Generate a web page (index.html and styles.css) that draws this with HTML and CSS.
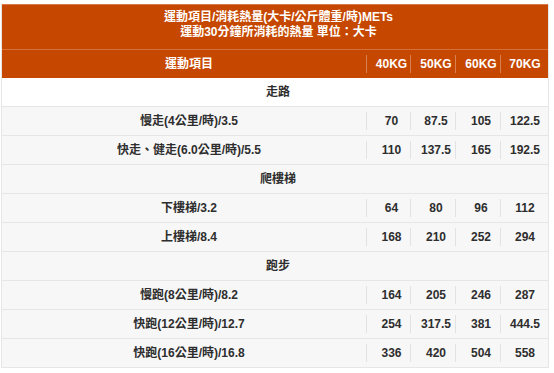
FILE: index.html
```html
<!DOCTYPE html>
<html lang="zh-Hant">
<head>
<meta charset="utf-8">
<title>運動消耗熱量</title>
<link rel="stylesheet" href="styles.css">
</head>
<body>
<div class="sheet">
  <div class="caption">
    <div>運動項目/消耗熱量(大卡/公斤體重/時)METs</div>
    <div>運動30分鐘所消耗的熱量 單位：大卡</div>
  </div>
  <div class="row head">
    <div class="name">運動項目</div>
    <div class="num">40KG</div>
    <div class="num">50KG</div>
    <div class="num">60KG</div>
    <div class="num">70KG</div>
  </div>
  <div class="row cat first"><div class="catname">走路</div></div>
  <div class="row">
    <div class="name">慢走(4公里/時)/3.5</div>
    <div class="num">70</div><div class="num">87.5</div><div class="num">105</div><div class="num">122.5</div>
  </div>
  <div class="row">
    <div class="name">快走、健走(6.0公里/時)/5.5</div>
    <div class="num">110</div><div class="num">137.5</div><div class="num">165</div><div class="num">192.5</div>
  </div>
  <div class="row cat"><div class="catname">爬樓梯</div></div>
  <div class="row">
    <div class="name">下樓梯/3.2</div>
    <div class="num">64</div><div class="num">80</div><div class="num">96</div><div class="num">112</div>
  </div>
  <div class="row">
    <div class="name">上樓梯/8.4</div>
    <div class="num">168</div><div class="num">210</div><div class="num">252</div><div class="num">294</div>
  </div>
  <div class="row cat"><div class="catname">跑步</div></div>
  <div class="row">
    <div class="name">慢跑(8公里/時)/8.2</div>
    <div class="num">164</div><div class="num">205</div><div class="num">246</div><div class="num">287</div>
  </div>
  <div class="row">
    <div class="name">快跑(12公里/時)/12.7</div>
    <div class="num">254</div><div class="num">317.5</div><div class="num">381</div><div class="num">444.5</div>
  </div>
  <div class="row">
    <div class="name">快跑(16公里/時)/16.8</div>
    <div class="num">336</div><div class="num">420</div><div class="num">504</div><div class="num">558</div>
  </div>
</div>
</body>
</html>
```
FILE: styles.css
```css
html, body {
  margin: 0;
  padding: 0;
  background: #ffffff;
}
body {
  font-family: "Liberation Sans", "Noto Sans CJK TC", sans-serif;
  font-size: 12px;
  font-weight: bold;
  color: #2e2e2e;
}
.sheet {
  margin: 4px 0 0 1px;
  width: 548px;
  border-left: 1px solid #e6e6e6;
  border-right: 1px solid #e6e6e6;
  box-sizing: border-box;
}
.caption {
  background: #c64800;
  color: #ffffff;
  text-align: center;
  padding: 5px 0 5px 7px;
  line-height: 15px;
  height: 46px;
  box-sizing: border-box;
  border-top: 1px solid #d67a48;
  border-bottom: 1px solid #d4703a;
}
.row {
  display: grid;
  grid-template-columns: 364px 44px 45px 45px 1fr;
  align-items: center;
  height: 29px;
  box-sizing: border-box;
  background: #f7f7f7;
  border-bottom: 1px solid #e6e6e6;
}
.row.head {
  background: #c64800;
  color: #ffffff;
  height: 28px;
  border-bottom: none;
}
.row.first {
  background: #ffffff;
}
.name {
  text-align: center;
  padding-left: 10px;
  line-height: 18px;
}
.num {
  text-align: center;
  line-height: 18px;
  height: 18px;
  padding-left: 6px;
  border-left: 1px solid #e2e2e2;
}
.num:last-child {
  padding-left: 1px;
}
.head .num {
  border-left-color: #d98050;
}
.catname {
  grid-column: 1 / -1;
  text-align: center;
  padding-left: 6px;
  line-height: 18px;
}
```
